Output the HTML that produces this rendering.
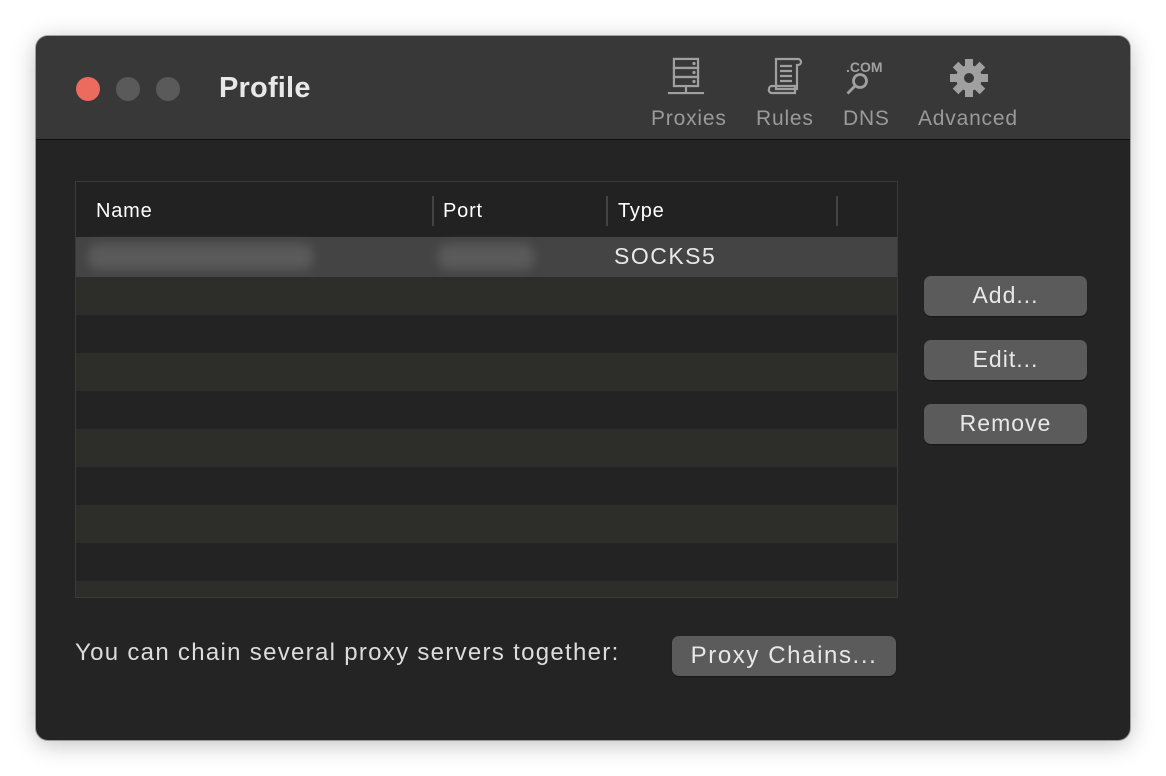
<!DOCTYPE html>
<html><head><style>
*{margin:0;padding:0;box-sizing:border-box}
body{width:1166px;height:776px;background:#fff;position:relative;overflow:hidden;font-family:"Liberation Sans",sans-serif}
.win{position:absolute;left:36px;top:36px;width:1094px;height:704px;border-radius:12px;background:#242424;overflow:hidden;box-shadow:0 4px 24px rgba(0,0,0,.25),0 0 0 1px rgba(0,0,0,.3)}
.tb{position:absolute;left:0;top:0;width:100%;height:104px;background:#383838;border-bottom:1px solid #0e0e0e}
.dot{position:absolute;top:41px;width:24px;height:24px;border-radius:50%;background:#5a5a5a}
.title{position:absolute;left:183px;top:36px;font-size:29px;font-weight:bold;color:#e8e8e8;letter-spacing:.2px}
.tool{position:absolute;top:71px;font-size:21px;color:#9a9a9a;letter-spacing:.8px}
.abs{position:absolute}
.table{position:absolute;left:39px;top:145px;width:823px;height:417px;border:1px solid #3a3a3a;overflow:hidden;background:#232323}
.hdr{position:absolute;left:0;top:0;width:100%;height:55px;background:#222}
.hdr span{position:absolute;top:18px;font-size:20px;color:#fff;letter-spacing:.8px}
.sep{position:absolute;top:14px;width:2px;height:30px;background:#444}
.row{position:absolute;left:0;width:100%;height:38px}
.btn{position:absolute;left:888px;width:163px;height:40px;border-radius:7px;background:#5b5b5b;color:#e8e8e8;font-size:23px;text-align:center;line-height:39px;box-shadow:0 1px 1px rgba(0,0,0,.4);letter-spacing:1px}
</style></head><body>
<div class="win">
 <div class="tb">
  <div class="dot" style="left:40px;background:#ec6a5e"></div>
  <div class="dot" style="left:80px"></div>
  <div class="dot" style="left:120px"></div>
  <div class="title">Profile</div>
  <svg class="abs" style="left:632px;top:20px" width="42" height="42" viewBox="0 0 46 42" fill="none" stroke="#a0a0a0" stroke-width="2.2" transform="scale(1.1)">
   <rect x="8" y="3" width="24" height="9"/><rect x="8" y="12" width="24" height="9"/><rect x="8" y="21" width="24" height="9"/>
   <circle cx="28" cy="7.5" r="1.6" fill="#a0a0a0" stroke="none"/><circle cx="28" cy="16.5" r="1.6" fill="#a0a0a0" stroke="none"/><circle cx="28" cy="25.5" r="1.6" fill="#a0a0a0" stroke="none"/>
   <path d="M20 30v7M2 37h36"/>
  </svg>
  <svg class="abs" style="left:730px;top:20px" width="40" height="42" viewBox="0 0 40 42" fill="none" stroke="#a0a0a0" stroke-width="2.2">
   <path d="M10 3h22a3 3 0 0 1 0 6h-1v24H10z"/><path d="M3 33a3 3 0 0 1 3-3h23v7H6a3 3 0 0 1-3-4z"/><path d="M14 10h12M14 15h12M14 20h12M14 25h12"/>
  </svg>
  <div class="abs" style="left:810px;top:23px;font-size:14px;font-weight:bold;color:#a0a0a0">.COM</div>
  <svg class="abs" style="left:808px;top:34px" width="30" height="28" viewBox="0 0 30 28" fill="none" stroke="#a0a0a0" stroke-width="2.8">
   <circle cx="16" cy="11" r="6.5"/><path d="M11.5 15.5l-8 8"/>
  </svg>
  <svg class="abs" style="left:913px;top:22px" width="40" height="40" viewBox="-20 -20 40 40">
   <g fill="#a0a0a0">
    <circle r="13"/>
    <rect x="-4" y="-19" width="8" height="38"/><rect x="-4" y="-19" width="8" height="38" transform="rotate(45)"/><rect x="-4" y="-19" width="8" height="38" transform="rotate(90)"/><rect x="-4" y="-19" width="8" height="38" transform="rotate(135)"/>
   </g>
   <circle r="5" fill="#383838"/>
  </svg>
  <div class="tool" style="left:615px">Proxies</div>
  <div class="tool" style="left:720px">Rules</div>
  <div class="tool" style="left:807px">DNS</div>
  <div class="tool" style="left:882px">Advanced</div>
 </div>
 <div class="table">
  <div class="hdr">
   <span style="left:20px">Name</span><div class="sep" style="left:356px"></div>
   <span style="left:367px">Port</span><div class="sep" style="left:530px"></div>
   <span style="left:542px">Type</span><div class="sep" style="left:760px"></div>
  </div>
  <div class="row" style="top:55px;height:40px;background:#444"></div>
  <div class="abs" style="left:12px;top:62px;width:225px;height:26px;background:#5a5a5a;filter:blur(5px);border-radius:10px"></div>
  <div class="abs" style="left:362px;top:62px;width:96px;height:26px;background:#5a5a5a;filter:blur(5px);border-radius:10px"></div>
  <div class="abs" style="left:538px;top:61px;font-size:23px;color:#e8e8e8;letter-spacing:1.5px">SOCKS5</div>
  <div class="row" style="top:95px;background:#2d2d2a"></div>
  <div class="row" style="top:171px;background:#2d2d2a"></div>
  <div class="row" style="top:247px;background:#2d2d2a"></div>
  <div class="row" style="top:323px;background:#2d2d2a"></div>
  <div class="row" style="top:399px;background:#2d2d2a"></div>
 </div>
 <div class="btn" style="top:240px">Add...</div>
 <div class="btn" style="top:304px">Edit...</div>
 <div class="btn" style="top:368px">Remove</div>
 <div class="abs" style="left:39px;top:603px;font-size:24px;color:#dcdcdc;letter-spacing:1.3px;white-space:nowrap">You can chain several proxy servers together:</div>
 <div class="btn" style="left:636px;top:600px;width:224px;font-size:24px;letter-spacing:1.6px">Proxy Chains...</div>
</div>
</body></html>
